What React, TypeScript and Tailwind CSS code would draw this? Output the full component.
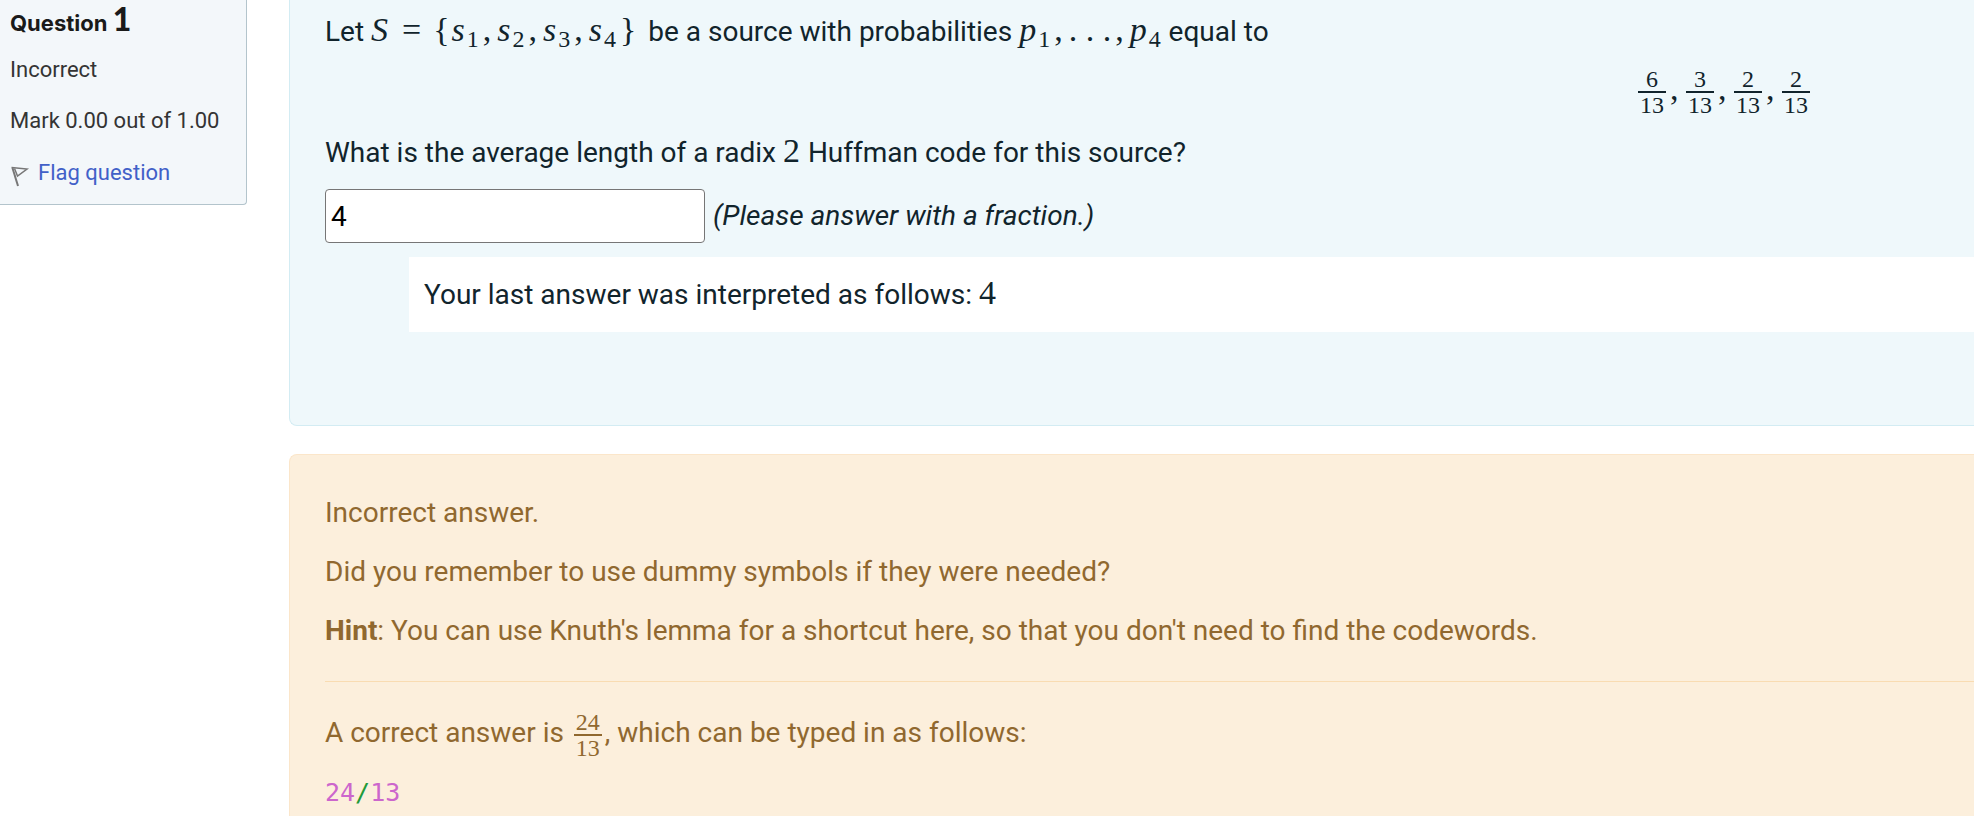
import type { ReactNode } from 'react';

function Sub({ base, index }: { base: string; index: string }) {
  return (
    <span>
      <span className="italic">{base}</span>
      <sub className="bottom-0 pl-0.5 align-[-6px] text-2xl leading-none">{index}</sub>
    </span>
  );
}

function MathText({ children }: { children: ReactNode }) {
  return (
    <span className="inline-flex items-baseline pr-px font-['Liberation_Serif',serif] text-[34px] leading-none">
      {children}
    </span>
  );
}

function Comma() {
  return <span className="pr-1.5 pl-1">,</span>;
}

function Fraction({ top, bottom }: { top: string; bottom: string }) {
  return (
    <span className="inline-flex flex-col text-center align-middle font-['Liberation_Serif',serif] text-2xl leading-6">
      <span className="border-b-2 border-current px-0.5">{top}</span>
      <span className="px-0.5">{bottom}</span>
    </span>
  );
}

function FlagIcon() {
  return (
    <svg className="mt-2 h-6 w-5" viewBox="0 0 20 24" fill="none" stroke="#777" aria-hidden="true">
      <path d="M2.5 3 L8 21" strokeWidth="2" />
      <path d="M1.5 2.5 L17 4 L7.5 11 L4.5 3.5" strokeWidth="1.5" />
    </svg>
  );
}

const symbols = ['1', '2', '3', '4'];
const weights = ['6', '3', '2', '2'];

export default function App() {
  return (
    <div className="flex items-start gap-[42px] overflow-hidden bg-white font-[Roboto,sans-serif]">
      <aside className="w-[247px] shrink-0 rounded-br border-r border-b border-[#b3c4cc] bg-[#f3f7fa] pb-[15px] pl-2.5 text-[22px] leading-8 text-[#343434]">
        <h3 className="font-[Inter,sans-serif] text-[22px] font-bold leading-[38px] text-[#1a1a1a]">
          Question <span className="font-[Lato,sans-serif] text-[32px] font-black">1</span>
        </h3>
        <div className="mt-3">Incorrect</div>
        <div className="mt-[19px]">Mark 0.00 out of 1.00</div>
        <a href="#flag" className="mt-5 flex items-start gap-2 text-[#4160c8]">
          <FlagIcon />
          Flag question
        </a>
      </aside>

      <main className="min-w-0 flex-1 text-[28px] leading-[42px]">
        <section className="rounded-bl-lg border-b border-l border-[#d3ecf3] bg-[#eff8fb] pt-[11px] pb-[93px] pl-[35px] text-[#11242c]">
          <p className="h-[42px] whitespace-nowrap">
            Let{' '}
            <MathText>
              <span className="pr-2.5 italic">S</span>
              <span className="pr-2.5 pl-1">=</span>
              <span className="px-0.5">{'{'}</span>
              {symbols.map((n, i) => (
                <span key={n}>
                  <Sub base="s" index={n} />
                  {i < 3 && <Comma />}
                </span>
              ))}
              <span className="px-1">{'}'}</span>
            </MathText>{' '}
            be a source with probabilities{' '}
            <MathText>
              <Sub base="p" index="1" />
              <Comma />
              <span>. . .</span>
              <Comma />
              <Sub base="p" index="4" />
            </MathText>{' '}
            equal to
          </p>
          <div className="mt-3.5 flex h-[50px] items-center justify-end pr-[164px] font-['Liberation_Serif',serif] text-[34px] leading-none">
            {weights.map((w, i) => (
              <span key={i} className="flex items-center">
                <Fraction top={w} bottom="13" />
                {i < 3 && <span className="w-5 pb-1.5 pl-1">,</span>}
              </span>
            ))}
          </div>
          <p className="mt-[15px] h-[42px]">
            What is the average length of a radix <MathText>2</MathText> Huffman code for this source?
          </p>
          <div className="mt-[15px] flex items-center gap-2">
            <input
              type="text"
              aria-label="Answer"
              defaultValue="4"
              className="h-[54px] w-[380px] rounded border border-[#767676] bg-white px-[5px] text-black"
            />
            <em>(Please answer with a fraction.)</em>
          </div>
          <div className="mt-3.5 ml-[84px] h-[75px] bg-white pt-[17px] pl-[15px]">
            Your last answer was interpreted as follows: <MathText>4</MathText>
          </div>
        </section>

        <section className="mt-7 flex flex-col gap-[17px] rounded-tl-lg border-t border-l border-[#fbe6ca] bg-[#fcefdc] pt-[37px] pb-4 pl-[35px] text-[#90682f]">
          <p>Incorrect answer.</p>
          <p>Did you remember to use dummy symbols if they were needed?</p>
          <p>
            <strong>Hint</strong>: You can use Knuth's lemma for a shortcut here, so that you don't need to find
            the codewords.
          </p>
          <hr className="mt-3 border-[#f9dcb2]" />
          <p className="mt-[11px]">
            A correct answer is{' '}
            <span className="px-[3px]">
              <Fraction top="24" bottom="13" />
            </span>
            , which can be typed in as follows:
          </p>
          <code className="font-['DejaVu_Sans_Mono',monospace] text-[25px] leading-8 text-[#cc66cc]">
            24<span className="text-[#229a3a]">/</span>13
          </code>
        </section>
      </main>
    </div>
  );
}
